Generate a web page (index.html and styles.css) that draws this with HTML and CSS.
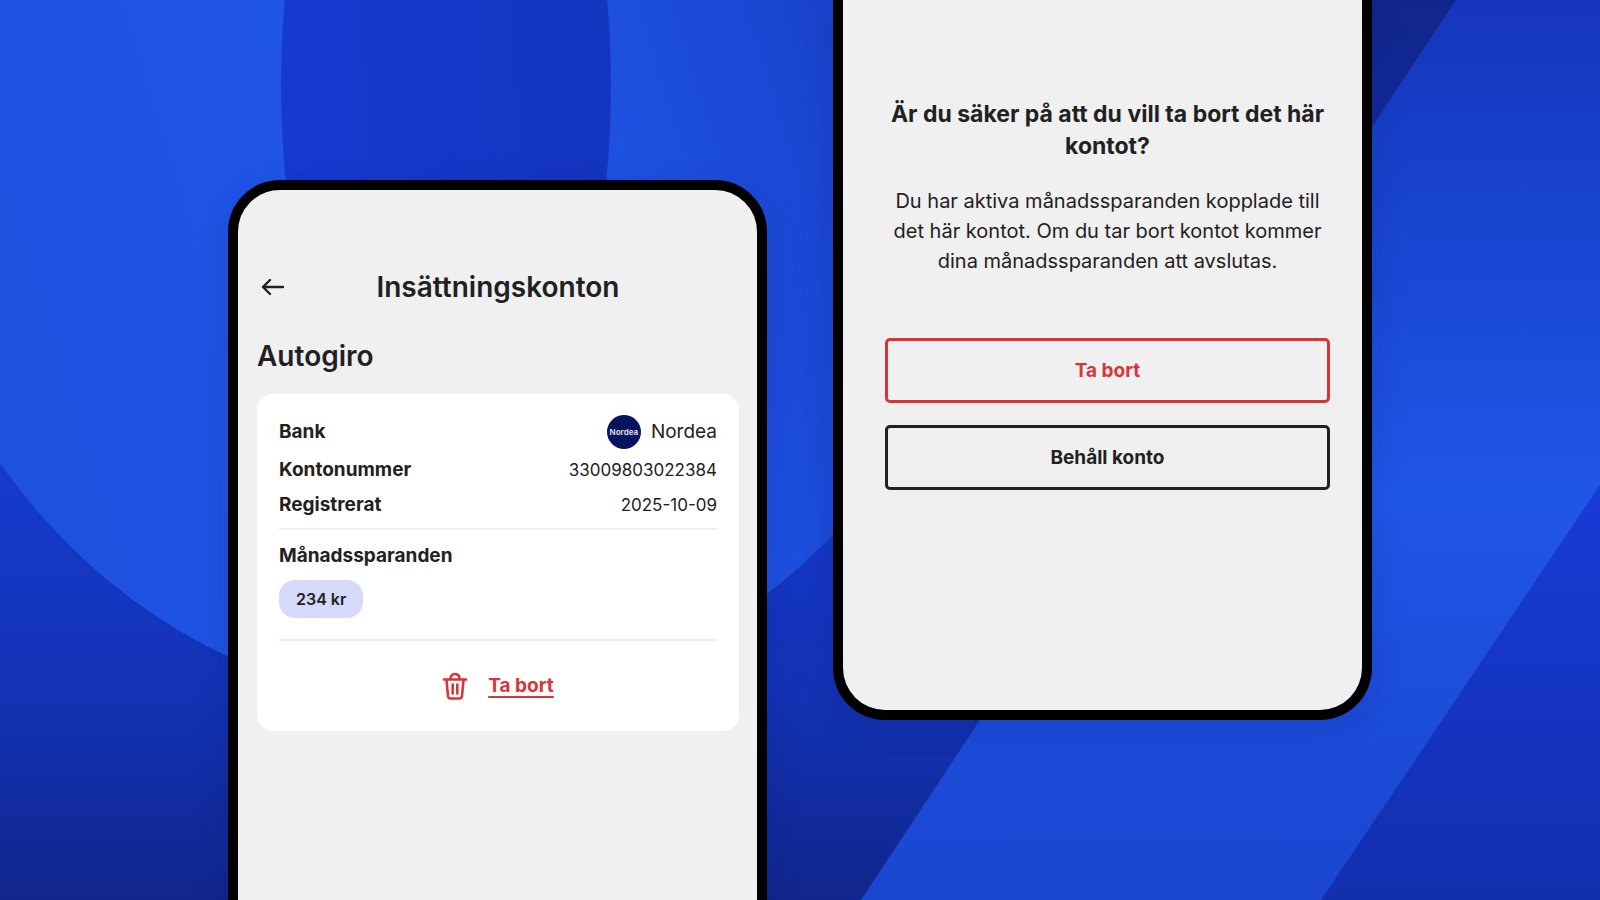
FILE: index.html
```html
<!DOCTYPE html>
<html lang="sv">
<head>
    <meta charset="utf-8">
    <meta name="viewport" content="width=device-width, initial-scale=1">
    <title>Insättningskonton</title>
    <link rel="stylesheet" href="styles.css">
</head>
<body>
    <div class="stage">
        <svg class="backdrop" viewBox="0 0 1600 900" preserveAspectRatio="xMidYMid slice" aria-hidden="true">
            <defs>
                <linearGradient id="base" x1="0" y1="0" x2="0" y2="1">
                    <stop offset="0" stop-color="#10268a"/>
                    <stop offset="0.14" stop-color="#122a9c"/>
                    <stop offset="0.54" stop-color="#1539cb"/>
                    <stop offset="0.78" stop-color="#1332b4"/>
                    <stop offset="1" stop-color="#10268c"/>
                </linearGradient>
                <linearGradient id="disc" gradientUnits="userSpaceOnUse" x1="0" y1="300" x2="960" y2="0">
                    <stop offset="0" stop-color="#1e51e0"/>
                    <stop offset="0.4" stop-color="#2056e9"/>
                    <stop offset="0.65" stop-color="#1e50e0"/>
                    <stop offset="1" stop-color="#173cc2"/>
                </linearGradient>
                <linearGradient id="hole" x1="0" y1="0.6" x2="1" y2="0.4">
                    <stop offset="0" stop-color="#1639d2"/>
                    <stop offset="1" stop-color="#1435be"/>
                </linearGradient>
                <linearGradient id="stripe" x1="0" y1="0" x2="0" y2="1">
                    <stop offset="0" stop-color="#1535bc"/>
                    <stop offset="0.2" stop-color="#1842cc"/>
                    <stop offset="0.55" stop-color="#2056e8"/>
                    <stop offset="0.75" stop-color="#1d4edd"/>
                    <stop offset="1" stop-color="#1a46d0"/>
                </linearGradient>
                <linearGradient id="corner" x1="0" y1="0" x2="0" y2="1">
                    <stop offset="0" stop-color="#173bd6"/>
                    <stop offset="1" stop-color="#122faf"/>
                </linearGradient>
            </defs>
            <rect width="1600" height="900" fill="url(#base)"/>
            <ellipse cx="446" cy="78" rx="565" ry="627" fill="url(#disc)"/>
            <ellipse cx="446" cy="85" rx="165" ry="400" fill="url(#hole)"/>
            <path d="M1456 0H1600V900H861z" fill="url(#stripe)"/>
            <path d="M1600 485V900H1321z" fill="url(#corner)"/>
        </svg>

        <section class="phone phone-accounts">
            <header class="topbar">
                <button class="back" type="button" aria-label="Tillbaka">
                    <svg width="24" height="24" viewBox="0 0 24 24" fill="none" stroke="currentColor" stroke-width="2.4" stroke-linecap="round" stroke-linejoin="round">
                        <path d="M22 12H2M9 5L2 12l7 7"/>
                    </svg>
                </button>
                <h1>Insättningskonton</h1>
            </header>

            <h2>Autogiro</h2>
            <div class="card">
                <dl class="details">
                    <div class="row row-bank">
                        <dt>Bank</dt>
                        <dd class="bank"><span class="bank-logo" aria-hidden="true">Nordea</span>Nordea</dd>
                    </div>
                    <div class="row">
                        <dt>Kontonummer</dt>
                        <dd class="number">33009803022384</dd>
                    </div>
                    <div class="row">
                        <dt>Registrerat</dt>
                        <dd class="number">2025-10-09</dd>
                    </div>
                </dl>
                <div class="savings">
                    <h3>Månadssparanden</h3>
                    <span class="chip">234 kr</span>
                </div>
                <a class="remove" href="#remove">
                    <svg width="26" height="28" viewBox="0 0 26 28" fill="none" stroke="currentColor" stroke-width="2.6" stroke-linecap="round" stroke-linejoin="round">
                        <path d="M2 7.5H24"/>
                        <path d="M8.5 7C8.5 4 10 2 13 2s4.500 2 4.500 5"/>
                        <path d="M4.500 8L6 24c.1 1.500 1 2.500 2.500 2.500h9c1.500 0 2.400-1 2.500-2.500L21.500 8"/>
                        <path d="M10.700 12.500v9M15.300 12.500v9"/>
                    </svg>
                    <span>Ta bort</span>
                </a>
            </div>
        </section>

        <section class="phone phone-confirm" id="remove">
            <h2>Är du säker på att du vill ta bort det här kontot?</h2>
            <p>Du har aktiva månadssparanden kopplade till det här kontot. Om du tar bort kontot kommer dina månadssparanden att avslutas.</p>
            <div class="actions">
                <button class="btn btn-danger" type="button">Ta bort</button>
                <button class="btn" type="button">Behåll konto</button>
            </div>
        </section>
    </div>
</body>
</html>
```

FILE: styles.css
```css
* {
    box-sizing: border-box;
}
body {
    margin: 0;
    font-family: Inter, "Open Sans", sans-serif;
    font-size: 19px;
    line-height: 30px;
    color: #1f2123;
}
h1, h2, h3, p, dl, dd {
    margin: 0;
}
.stage {
    position: relative;
    display: flex;
    justify-content: center;
    align-items: flex-start;
    gap: 66px;
    height: 100vh;
    overflow: hidden;
}
.backdrop {
    position: absolute;
    inset: 0;
    width: 100%;
    height: 100%;
}

/* phones */
.phone {
    position: relative;
    width: 539px;
    background: #f0f0f0;
    border: 10px solid #000;
    box-shadow: 0 8px 32px rgba(10, 20, 90, 0.15);
}
.phone-accounts {
    margin-top: 20vh;
    min-height: 100vh;
    padding: 76px 18px 0 19px;
    border-radius: 52px;
}
.phone-confirm {
    min-height: 80vh;
    padding: 98px 32px 40px 42px;
    border-top: 0;
    border-radius: 0 0 52px 52px;
    text-align: center;
}

/* deposit accounts */
.topbar {
    display: grid;
    grid-template-columns: 32px 1fr 32px;
    align-items: center;
    height: 42px;
    margin-bottom: 28px;
}
.topbar h1 {
    text-align: center;
}
.back {
    display: flex;
    padding: 4px;
    border: 0;
    background: none;
    color: inherit;
    cursor: pointer;
}
.phone-accounts h1,
.phone-accounts h2 {
    font-size: 28px;
    line-height: 40px;
    font-weight: 600;
}
.card {
    margin-top: 18px;
    padding: 18px 22px 30px;
    background: #fff;
    border-radius: 16px;
}
.details {
    padding-bottom: 6px;
    border-bottom: 2px solid #efefef;
}
.row {
    display: flex;
    justify-content: space-between;
    align-items: center;
    min-height: 35px;
}
.row-bank {
    min-height: 40px;
}
dt, h3 {
    font-size: 19px;
    font-weight: 700;
}
.number {
    font-size: 17px;
}
.bank {
    display: flex;
    align-items: center;
    gap: 10px;
}
.bank-logo {
    width: 34px;
    height: 34px;
    border-radius: 50%;
    background: #06145f;
    color: #d9d6df;
    font-size: 8px;
    line-height: 34px;
    font-weight: 700;
    text-align: center;
}
.savings {
    padding: 11px 0 21px;
    border-bottom: 2px solid #efefef;
}
.chip {
    display: inline-block;
    margin-top: 9px;
    padding: 4px 17px;
    border-radius: 16px;
    background: #d4daf8;
    font-size: 16px;
    font-weight: 600;
}
.remove {
    display: flex;
    justify-content: center;
    align-items: center;
    gap: 20px;
    margin-top: 30px;
    color: #d93438;
    font-weight: 700;
    text-decoration: none;
}
.remove span {
    text-decoration: underline 2px;
    text-underline-offset: 4px;
}

/* confirm dialog */
.phone-confirm h2 {
    font-size: 23px;
    line-height: 32px;
    font-weight: 700;
}
.phone-confirm p {
    margin-top: 24px;
    font-size: 20px;
}
.actions {
    display: flex;
    flex-direction: column;
    gap: 22px;
    margin-top: 62px;
}
.btn {
    height: 65px;
    border: 3px solid #1f2123;
    border-radius: 5px;
    background: none;
    color: #1f2123;
    font-family: inherit;
    font-size: 19px;
    font-weight: 700;
    cursor: pointer;
}
.btn-danger {
    border-color: #d93438;
    color: #d93438;
}
```
